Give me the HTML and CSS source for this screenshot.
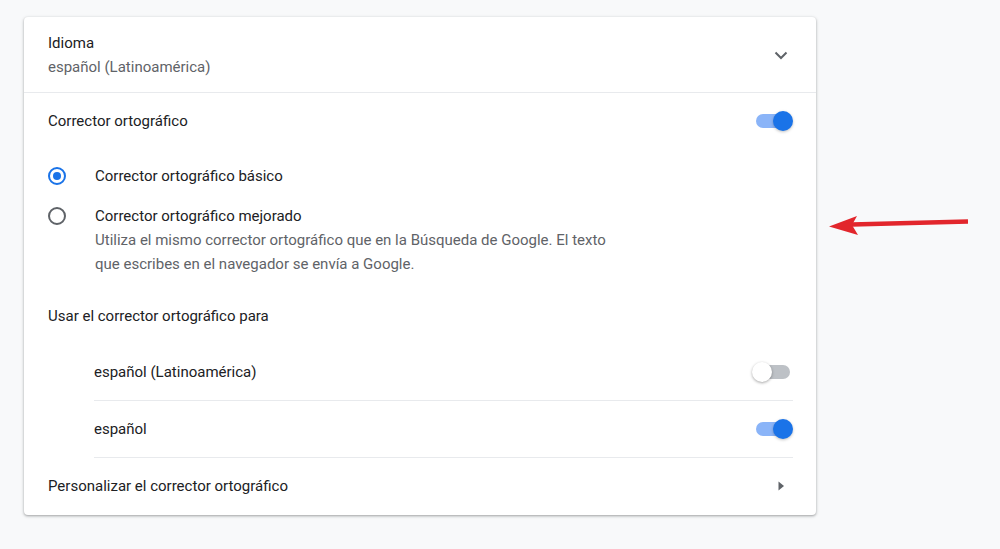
FILE: index.html
```html
<!DOCTYPE html>
<html lang="es">
<head>
<meta charset="utf-8">
<title>Idioma</title>
<link rel="stylesheet" href="styles.css">
</head>
<body>
<div class="page">
  <div class="card">
    <div class="lang-row">
      <div class="text">
        <div class="primary">Idioma</div>
        <div class="secondary">español (Latinoamérica)</div>
      </div>
      <div class="icon-box">
        <svg width="24" height="24" viewBox="0 0 24 24"><polyline points="6.5,9.5 12,15 17.5,9.5" fill="none" stroke="#5f6368" stroke-width="2"/></svg>
      </div>
    </div>
    <div class="section">
      <div class="row">
        <div class="primary">Corrector ortográfico</div>
        <div class="toggle on"><span class="knob"></span></div>
      </div>
      <div class="radio-group">
        <div class="radio-row">
          <span class="radio checked"></span>
          <div class="primary">Corrector ortográfico básico</div>
        </div>
        <div class="radio-row multi">
          <span class="radio"></span>
          <div>
            <div class="primary">Corrector ortográfico mejorado</div>
            <div class="secondary">Utiliza el mismo corrector ortográfico que en la Búsqueda de Google. El texto<br>que escribes en el navegador se envía a Google.</div>
          </div>
        </div>
      </div>
      <div class="heading primary">Usar el corrector ortográfico para</div>
      <div class="sublist">
        <div class="subrow">
          <div class="primary">español (Latinoamérica)</div>
          <div class="toggle"><span class="knob"></span></div>
        </div>
        <div class="subrow">
          <div class="primary">español</div>
          <div class="toggle on"><span class="knob"></span></div>
        </div>
      </div>
      <div class="row">
        <div class="primary">Personalizar el corrector ortográfico</div>
        <div class="icon-box">
          <svg width="24" height="24" viewBox="0 0 24 24"><polygon points="9.5,7.5 15,12 9.5,16.5" fill="#5f6368"/></svg>
        </div>
      </div>
    </div>
  </div>
  <svg class="annot-arrow" width="150" height="30" viewBox="820 210 150 30">
    <line x1="852" y1="224.6" x2="968" y2="221.4" stroke="#e2262c" stroke-width="4.5"/>
    <polygon points="829,226.5 857,216 852,225 858,235" fill="#e2262c"/>
  </svg>
</div>
</body>
</html>
```
FILE: styles.css
```css
* { box-sizing: border-box; }
html, body { margin: 0; padding: 0; }
body {
  background: #f8f9fa;
  font-family: Roboto, "Liberation Sans", Arial, sans-serif;
  font-size: 15px;
  line-height: 24px;
  color: #202124;
}
.page {
  position: relative;
  width: 1000px;
  height: 549px;
  padding: 17px 0 0 24px;
}
.card {
  width: 792px;
  height: 498px;
  background: #fff;
  border-radius: 4px;
  box-shadow: 0 1px 2px rgba(60, 64, 67, 0.3), 0 1px 3px 1px rgba(60, 64, 67, 0.15);
}
.primary { color: #202124; }
.secondary { color: #5f6368; }
.lang-row {
  height: 76px;
  padding: 1px 23px 0 24px;
  display: flex;
  align-items: center;
  justify-content: space-between;
  border-bottom: 1px solid #e8eaed;
}
.section { padding: 0 23px 0 24px; }
.row {
  height: 56px;
  display: flex;
  align-items: center;
  justify-content: space-between;
}
.icon-box { width: 24px; height: 24px; display: flex; }
.radio-group { padding-top: 7px; }
.radio-row {
  display: flex;
  align-items: center;
  height: 40px;
  gap: 29px;
}
.radio-row.multi {
  height: auto;
  align-items: flex-start;
  padding: 8px 0;
}
.radio-row.multi .radio { margin-top: 3px; }
.radio {
  width: 18px;
  height: 18px;
  flex: none;
  border-radius: 50%;
  border: 2px solid #5f6368;
  display: flex;
  align-items: center;
  justify-content: center;
}
.radio.checked { border-color: #1a73e8; }
.radio.checked::after {
  content: "";
  width: 8px;
  height: 8px;
  border-radius: 50%;
  background: #1a73e8;
}
.heading {
  height: 60px;
  padding-top: 20px;
}
.sublist { margin-left: 46px; }
.subrow {
  height: 57px;
  display: flex;
  align-items: center;
  justify-content: space-between;
  border-bottom: 1px solid #e8eaed;
}
.toggle {
  position: relative;
  width: 34px;
  height: 14px;
  margin-right: 3px;
  border-radius: 7px;
  background: #bdc1c6;
}
.toggle .knob {
  position: absolute;
  top: -3px;
  left: -4px;
  width: 20px;
  height: 20px;
  border-radius: 50%;
  background: #fff;
  box-shadow: 0 1px 3px rgba(0, 0, 0, 0.35);
}
.toggle.on { background: #8ab4f8; }
.toggle.on .knob {
  left: 17px;
  background: #1a73e8;
  box-shadow: 0 1px 3px rgba(0, 0, 0, 0.25);
}
.annot-arrow {
  position: absolute;
  left: 820px;
  top: 210px;
}
```
